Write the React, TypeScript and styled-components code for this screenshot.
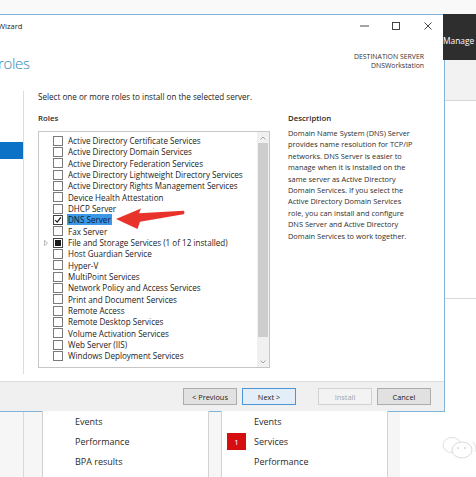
import React from "react";
import styled, { createGlobalStyle } from "styled-components";

const GlobalStyle = createGlobalStyle`
  html, body {
    margin: 0;
    padding: 0;
    background: #f7f7f7;
  }
  body {
    font-family: "Open Sans", "Noto Sans", sans-serif;
    color: #1f1f1f;
  }
`;

const roles: { name: string; state?: "checked" | "partial"; expandable?: boolean; selected?: boolean }[] = [
  { name: "Active Directory Certificate Services" },
  { name: "Active Directory Domain Services" },
  { name: "Active Directory Federation Services" },
  { name: "Active Directory Lightweight Directory Services" },
  { name: "Active Directory Rights Management Services" },
  { name: "Device Health Attestation" },
  { name: "DHCP Server" },
  { name: "DNS Server", state: "checked", selected: true },
  { name: "Fax Server" },
  { name: "File and Storage Services (1 of 12 installed)", state: "partial", expandable: true },
  { name: "Host Guardian Service" },
  { name: "Hyper-V" },
  { name: "MultiPoint Services" },
  { name: "Network Policy and Access Services" },
  { name: "Print and Document Services" },
  { name: "Remote Access" },
  { name: "Remote Desktop Services" },
  { name: "Volume Activation Services" },
  { name: "Web Server (IIS)" },
  { name: "Windows Deployment Services" },
];

const description = [
  "Domain Name System (DNS) Server",
  "provides name resolution for TCP/IP",
  "networks. DNS Server is easier to",
  "manage when it is installed on the",
  "same server as Active Directory",
  "Domain Services. If you select the",
  "Active Directory Domain Services",
  "role, you can install and configure",
  "DNS Server and Active Directory",
  "Domain Services to work together.",
];

const Page = styled.div`
  position: relative;
  width: 476px;
  height: 477px;
  overflow: hidden;
  display: flex;
  flex-direction: column;
  background: #f7f7f7;
`;

const TopStrip = styled.div`
  height: 14px;
  flex-shrink: 0;
  background: #f9f9f9;
`;

const Middle = styled.div`
  display: flex;
  height: 398px;
  flex-shrink: 0;
`;

const Dialog = styled.div`
  width: 445px;
  flex-shrink: 0;
  box-sizing: border-box;
  border: 1px solid #80b4da;
  border-left: none;
  background: #fff;
  display: flex;
  flex-direction: column;
`;

const TitleBar = styled.div`
  height: 21px;
  display: flex;
  align-items: center;
`;

const TitleText = styled.span`
  flex: 1;
  margin-left: -2px;
  font-size: 7.6px;
  color: #222;
`;

const WinButton = styled.div`
  width: 32px;
  height: 21px;
  display: flex;
  align-items: center;
  justify-content: center;
`;

const Header = styled.div`
  height: 55px;
  display: flex;
  justify-content: space-between;
  padding-right: 20px;
`;

const PageTitle = styled.div`
  margin-top: 18px;
  margin-left: -2px;
  font-size: 15px;
  line-height: 18px;
  font-weight: 300;
  letter-spacing: -0.3px;
  color: #3088b6;
`;

const Destination = styled.div`
  margin-top: 16px;
  text-align: right;
  font-size: 6.9px;
  line-height: 9px;
  color: #333;
`;

const Body = styled.div`
  flex: 1;
  display: flex;
  padding-bottom: 7px;
`;

const Nav = styled.div`
  width: 24px;
  flex-shrink: 0;
  box-sizing: border-box;
  border-right: 1px solid #dcdcdc;
`;

const NavActive = styled.div`
  margin-top: 51px;
  width: 23px;
  height: 17px;
  background: #0c72c5;
`;

const Content = styled.div`
  flex: 1;
  padding-left: 14px;
  display: flex;
  flex-direction: column;
`;

const Intro = styled.div`
  font-size: 8.1px;
  line-height: 12px;
  color: #222;
`;

const Columns = styled.div`
  display: flex;
  gap: 18px;
  margin-top: 9px;
`;

const RolesColumn = styled.div`
  width: 232px;
  flex-shrink: 0;
`;

const SectionLabel = styled.div`
  font-size: 7.8px;
  line-height: 12px;
  font-weight: 600;
  color: #2a2a2a;
`;

const ListBox = styled.div`
  margin-top: 7px;
  height: 237px;
  box-sizing: border-box;
  border: 1px solid #c6c6c6;
  display: flex;
`;

const Items = styled.div`
  flex: 1;
  padding-top: 3px;
  overflow: hidden;
`;

const Row = styled.div`
  height: 11.33px;
  display: flex;
  align-items: center;
  font-size: 8.1px;
  white-space: nowrap;
  color: #222;
`;

const Expander = styled.div`
  width: 14px;
  height: 100%;
  display: flex;
  align-items: center;
  justify-content: center;
`;

const Check = styled.div<{ $state?: "checked" | "partial" }>`
  width: 10px;
  height: 10px;
  flex-shrink: 0;
  box-sizing: border-box;
  border: 1px solid ${(p) => (p.$state ? "#444" : "#7a7a7a")};
  margin-right: 4px;
  display: flex;
  align-items: center;
  justify-content: center;
  background: #fff;
`;

const PartialMark = styled.div`
  width: 6px;
  height: 6px;
  background: #1a1a1a;
`;

const RoleName = styled.span<{ $selected?: boolean }>`
  padding: 0 1px;
  line-height: 11px;
  background: ${(p) => (p.$selected ? "#3c97e6" : "transparent")};
  color: ${(p) => (p.$selected ? "#0b1a33" : "#222")};
`;

const ScrollBar = styled.div`
  width: 12px;
  flex-shrink: 0;
  display: flex;
  flex-direction: column;
  background: #f0f0f0;
`;

const ScrollArrow = styled.div<{ $h: number }>`
  height: ${(p) => p.$h}px;
  display: flex;
  align-items: center;
  justify-content: center;
`;

const ScrollThumb = styled.div`
  height: 194px;
  margin: 0 1px;
  background: #cdcdcd;
`;

const ScrollTrack = styled.div`
  flex: 1;
`;

const DescColumn = styled.div`
  flex: 1;
`;

const DescText = styled.div`
  margin-top: 4px;
  font-size: 7.4px;
  line-height: 11.4px;
  color: #2e2e2e;
  white-space: nowrap;
`;

const ButtonBar = styled.div`
  height: 30px;
  box-sizing: border-box;
  border-top: 1px solid #dddddd;
  background: #f0f0f0;
  display: flex;
  align-items: center;
  justify-content: flex-end;
  padding-right: 13px;
`;

const WizardButton = styled.div<{ $variant?: "primary" | "disabled"; $gap: number }>`
  width: 54px;
  height: 17px;
  margin-left: ${(p) => p.$gap}px;
  box-sizing: border-box;
  display: flex;
  align-items: center;
  justify-content: center;
  font-size: 7.4px;
  border: 1px solid
    ${(p) => (p.$variant === "primary" ? "#4a95d6" : p.$variant === "disabled" ? "#d2d2d2" : "#adadad")};
  background: ${(p) => (p.$variant === "primary" ? "#e3eef8" : p.$variant === "disabled" ? "#f3f3f3" : "#e1e1e1")};
  color: ${(p) => (p.$variant === "disabled" ? "#a6a6a6" : "#222")};
`;

const SidePane = styled.div`
  flex: 1;
  display: flex;
  flex-direction: column;
  background: #fff;
`;

const ManageBar = styled.div`
  height: 46px;
  background: #2e2e2e;
  color: #fff;
  font-size: 8.4px;
  line-height: 12px;
  padding-top: 21px;
  box-sizing: border-box;
  margin-left: -2px;
  white-space: nowrap;
`;

const GrayBand = styled.div`
  height: 40px;
  background: #f2f2f2;
  border-bottom: 1px solid #d6d6d6;
`;

const WhiteBand = styled.div`
  height: 197px;
  border-bottom: 1px solid #dadada;
`;

const Bottom = styled.div`
  flex: 1;
  display: flex;
  background: #f6f6f6;
`;

const Gutter = styled.div`
  width: 24px;
  box-sizing: border-box;
  border-right: 1px solid #d8d8d8;
  margin-right: 18px;
`;

const Tile = styled.div`
  width: 167px;
  box-sizing: border-box;
  border-left: 1px solid #d2d2d2;
  border-right: 1px solid #d2d2d2;
  background: #fff;
  margin-right: 12px;
  margin-top: -1px;
`;

const TileRow = styled.div`
  height: 20px;
  display: flex;
  align-items: center;
  font-size: 9px;
  color: #2a2a2a;
`;

const BadgeSlot = styled.div`
  width: 32px;
  height: 100%;
  display: flex;
  align-items: center;
  padding-left: 5px;
  box-sizing: border-box;
`;

const Badge = styled.div`
  width: 19px;
  height: 17px;
  background: #d50f0f;
  color: #fff;
  font-size: 8px;
  display: flex;
  align-items: center;
  justify-content: center;
`;

const BottomRest = styled.div`
  flex: 1;
  background: #fff;
`;

const ArrowMark = styled.svg`
  position: absolute;
  left: 110px;
  top: 200px;
`;

const Watermark = styled.svg`
  position: absolute;
  left: 440px;
  top: 434px;
`;

const Chevron = ({ up }: { up?: boolean }) => (
  <svg width="6" height="4" viewBox="0 0 6 4">
    <path d={up ? "M0.5 3.5 L3 1 L5.5 3.5" : "M0.5 0.5 L3 3 L5.5 0.5"} fill="none" stroke="#9a9a9a" strokeWidth="0.9" />
  </svg>
);

export default function App() {
  return (
    <Page>
      <GlobalStyle />
      <TopStrip />
      <Middle>
        <Dialog>
          <TitleBar>
            <TitleText>Wizard</TitleText>
            <WinButton>
              <svg width="9" height="2" viewBox="0 0 9 2">
                <line x1="0" y1="1" x2="9" y2="1" stroke="#333" strokeWidth="0.9" />
              </svg>
            </WinButton>
            <WinButton>
              <svg width="8" height="8" viewBox="0 0 8 8">
                <rect x="0.5" y="0.5" width="7" height="7" fill="none" stroke="#333" strokeWidth="0.9" />
              </svg>
            </WinButton>
            <WinButton>
              <svg width="8" height="8" viewBox="0 0 8 8">
                <path d="M0.5 0.5 L7.5 7.5 M7.5 0.5 L0.5 7.5" stroke="#333" strokeWidth="0.9" />
              </svg>
            </WinButton>
          </TitleBar>
          <Header>
            <PageTitle>roles</PageTitle>
            <Destination>
              <div>DESTINATION SERVER</div>
              <div>DNSWorkstation</div>
            </Destination>
          </Header>
          <Body>
            <Nav>
              <NavActive />
            </Nav>
            <Content>
              <Intro>Select one or more roles to install on the selected server.</Intro>
              <Columns>
                <RolesColumn>
                  <SectionLabel>Roles</SectionLabel>
                  <ListBox>
                    <Items>
                      {roles.map((r) => (
                        <Row key={r.name}>
                          <Expander>
                            {r.expandable && (
                              <svg width="4" height="6" viewBox="0 0 4 6">
                                <path d="M0.5 0.5 L3.5 3 L0.5 5.5 Z" fill="none" stroke="#a8a8a8" strokeWidth="0.8" />
                              </svg>
                            )}
                          </Expander>
                          <Check $state={r.state}>
                            {r.state === "checked" && (
                              <svg width="8" height="8" viewBox="0 0 8 8">
                                <path d="M1.2 4.2 L3.2 6.2 L6.9 1.4" fill="none" stroke="#111" strokeWidth="1.2" />
                              </svg>
                            )}
                            {r.state === "partial" && <PartialMark />}
                          </Check>
                          <RoleName $selected={r.selected}>{r.name}</RoleName>
                        </Row>
                      ))}
                    </Items>
                    <ScrollBar>
                      <ScrollArrow $h={11}>
                        <Chevron up />
                      </ScrollArrow>
                      <ScrollThumb />
                      <ScrollTrack />
                      <ScrollArrow $h={10}>
                        <Chevron />
                      </ScrollArrow>
                    </ScrollBar>
                  </ListBox>
                </RolesColumn>
                <DescColumn>
                  <SectionLabel>Description</SectionLabel>
                  <DescText>
                    {description.map((line) => (
                      <div key={line}>{line}</div>
                    ))}
                  </DescText>
                </DescColumn>
              </Columns>
            </Content>
          </Body>
          <ButtonBar>
            <WizardButton $gap={0}>&lt; Previous</WizardButton>
            <WizardButton $gap={5} $variant="primary">
              Next &gt;
            </WizardButton>
            <WizardButton $gap={22} $variant="disabled">
              Install
            </WizardButton>
            <WizardButton $gap={5}>Cancel</WizardButton>
          </ButtonBar>
        </Dialog>
        <SidePane>
          <ManageBar>Manage</ManageBar>
          <GrayBand />
          <WhiteBand />
        </SidePane>
      </Middle>
      <Bottom>
        <Gutter />
        <Tile>
          <TileRow>
            <BadgeSlot />
            Events
          </TileRow>
          <TileRow>
            <BadgeSlot />
            Performance
          </TileRow>
          <TileRow>
            <BadgeSlot />
            BPA results
          </TileRow>
        </Tile>
        <Tile>
          <TileRow>
            <BadgeSlot />
            Events
          </TileRow>
          <TileRow>
            <BadgeSlot>
              <Badge>1</Badge>
            </BadgeSlot>
            Services
          </TileRow>
          <TileRow>
            <BadgeSlot />
            Performance
          </TileRow>
        </Tile>
        <BottomRest />
      </Bottom>
      <ArrowMark width="80" height="35" viewBox="0 0 80 35">
        <path
          d="M6 19 L31 8.5 L29 13.2 L73.5 10.8 Q75.5 12.4 73.5 14.2 L30 21.8 L27.5 29 Z"
          fill="#e8332b"
        />
      </ArrowMark>
      <Watermark width="38" height="28" viewBox="0 0 38 28">
        <ellipse cx="12" cy="11" rx="9" ry="7.5" fill="none" stroke="#dadada" strokeWidth="0.9" />
        <ellipse cx="22" cy="16" rx="10" ry="8" fill="#fff" stroke="#d6d6d6" strokeWidth="0.9" />
        <circle cx="18" cy="14" r="0.9" fill="#d6d6d6" />
        <circle cx="25" cy="14" r="0.9" fill="#d6d6d6" />
        <path d="M33 8 Q37 12 36 18" fill="none" stroke="#dadada" strokeWidth="0.9" />
      </Watermark>
    </Page>
  );
}
